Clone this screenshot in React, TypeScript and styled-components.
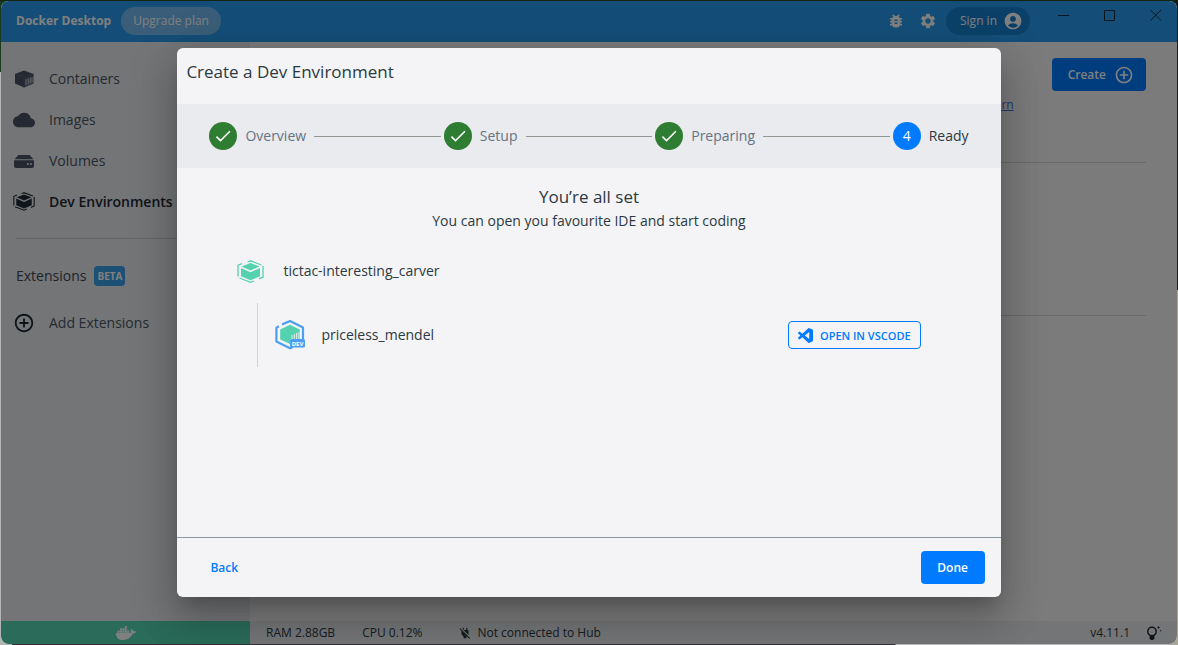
import React from "react";
import styled, { createGlobalStyle } from "styled-components";
import {
  MdAccountCircle,
  MdAddCircleOutline,
  MdBugReport,
  MdCheck,
  MdCloud,
  MdPowerOff,
  MdSettings,
} from "react-icons/md";
import { FaDocker } from "react-icons/fa";

const GlobalStyle = createGlobalStyle`
  *, *::before, *::after { box-sizing: border-box; }
  body {
    margin: 0;
    font-family: "Open Sans", "Noto Sans", sans-serif;
    font-size: 14px;
    line-height: 20px;
    color: #2b3a42;
  }
  button { font-family: inherit; cursor: pointer; }
  h1, h2, p, ul, ol { margin: 0; padding: 0; }
  svg { display: block; flex: none; }
`;

const Desktop = styled.div`
  min-height: 100vh;
  display: flex;
  padding: 1px;
  background:
    linear-gradient(#14240f, #14240f) top / 100% 1px no-repeat,
    linear-gradient(#33303a, #33303a) 12px 100% / 75% 1px no-repeat,
    linear-gradient(#1c1c1c 45%, #aaa698 45%) right / 8px 100% no-repeat,
    linear-gradient(#1c3a1c 72px, #b4b6b6 72px);
`;

const AppWindow = styled.div`
  flex: 1;
  display: flex;
  flex-direction: column;
  position: relative;
  border-radius: 8px;
  overflow: hidden;
  background: #f6f6f6;
`;

const TitleBar = styled.header`
  height: 41px;
  display: flex;
  align-items: center;
  padding: 0 15px 2px;
  background: #289cf0;
  color: #fff;
`;

const Brand = styled.span`
  font-size: 12px;
  font-weight: 700;
  margin-right: 10px;
`;

const Pill = styled.button<{ $tone: "light" | "dark" }>`
  display: flex;
  align-items: center;
  gap: 6px;
  height: 28px;
  padding: ${(p) => (p.$tone === "light" ? "0 12px" : "0 7px 0 14px")};
  border: 0;
  border-radius: 14px;
  font-size: 12px;
  color: #fff;
  background: ${(p) => (p.$tone === "light" ? "#74bcf2" : "#1682d2")};
`;

const Spacer = styled.div`
  flex: 1;
`;

const BarActions = styled.div`
  display: flex;
  gap: 14px;
  margin-right: 9px;
`;

const BarButton = styled.button`
  display: flex;
  padding: 0;
  border: 0;
  background: none;
  color: #fff;
`;

const WindowControls = styled.div`
  display: flex;
  align-self: flex-start;
  gap: 34px;
  margin-left: 28px;
  padding-top: 8px;
`;

const WindowButton = styled(BarButton)`
  color: #1d2c3a;
`;

const Middle = styled.div`
  flex: 1;
  display: flex;
`;

const Sidebar = styled.nav`
  width: 249px;
  padding: 16px 15px 0 12px;
  background: #e9ebee;
`;

const NavList = styled.ul`
  list-style: none;
`;

const NavLink = styled.a<{ $active?: boolean }>`
  display: flex;
  align-items: center;
  gap: 14px;
  height: 41px;
  color: ${(p) => (p.$active ? "#1c2833" : "#4a5564")};
  font-weight: ${(p) => (p.$active ? 600 : 400)};
  text-decoration: none;
`;

const SideRule = styled.hr`
  margin: 16px 0 27px 3px;
  border: 0;
  border-top: 1px solid #c8cbd0;
`;

const SectionTitle = styled.div`
  display: flex;
  align-items: center;
  gap: 8px;
  padding-left: 3px;
  margin-bottom: 16px;
  color: #3c4752;
`;

const Badge = styled.span`
  padding: 0 3px;
  border-radius: 4px;
  font-size: 10px;
  font-weight: 700;
  color: #fff;
  background: #38a0e8;
`;

const Main = styled.main`
  flex: 1;
  padding: 16px 31px 0 24px;
`;

const MainHead = styled.div`
  display: flex;
  justify-content: flex-end;
  align-items: flex-start;
  gap: 38px;
  height: 105px;
  border-bottom: 1px solid #d2d4d8;
`;

const LearnLink = styled.a`
  margin-top: 37px;
  font-size: 12px;
  color: #4478e8;
`;

const MainRow = styled.div`
  height: 153px;
  border-bottom: 1px solid #d2d4d8;
`;

const SolidButton = styled.button`
  display: flex;
  align-items: center;
  justify-content: center;
  gap: 8px;
  min-width: 64px;
  height: 33px;
  padding: 0 12px 0 16px;
  border: 0;
  border-radius: 4px;
  font-size: 12px;
  font-weight: 600;
  color: #fff;
  background: #007bff;
`;

const DoneButton = styled(SolidButton)`
  padding: 0 16px;
`;

const StatusBar = styled.footer`
  height: 23px;
  display: flex;
  font-size: 12px;
  background: #e9ebee;
`;

const Engine = styled.div`
  width: 249px;
  display: flex;
  align-items: center;
  justify-content: center;
  color: #fff;
  background: #54d6b2;
`;

const Stats = styled.div`
  flex: 1;
  display: flex;
  align-items: center;
  padding: 0 15px 0 16px;
`;

const Stat = styled.span<{ $gap: number }>`
  display: flex;
  align-items: center;
  gap: 5px;
  margin-right: ${(p) => p.$gap}px;
`;

const Backdrop = styled.div`
  position: absolute;
  inset: 0;
  display: flex;
  align-items: center;
  justify-content: center;
  background: rgba(0, 0, 0, 0.5);
`;

const Dialog = styled.section`
  width: 70%;
  height: calc(100vh - 96px);
  display: flex;
  flex-direction: column;
  border-radius: 6px;
  overflow: hidden;
  background: #f4f4f6;
  box-shadow: 0 11px 15px -7px rgba(0, 0, 0, 0.2),
    0 24px 38px 3px rgba(0, 0, 0, 0.14), 0 9px 46px 8px rgba(0, 0, 0, 0.12);
`;

const DialogTitle = styled.h1`
  height: 56px;
  padding: 12px 9px;
  font-size: 17px;
  line-height: 24px;
  font-weight: 500;
`;

const Stepper = styled.ol`
  display: flex;
  align-items: center;
  height: 64px;
  padding: 0 32px;
  list-style: none;
  background: #e9ebee;
`;

const Step = styled.li<{ $current?: boolean }>`
  display: flex;
  align-items: center;
  gap: 8px;
  color: ${(p) => (p.$current ? "#2b3a42" : "#677285")};

  &:not(:last-child) {
    flex: 1 1 auto;
  }
  &:not(:last-child)::after {
    content: "";
    flex: 1;
    margin-right: 3px;
    border-top: 1px solid #949894;
  }
`;

const StepDot = styled.span<{ $current?: boolean }>`
  display: flex;
  align-items: center;
  justify-content: center;
  width: 28px;
  height: 28px;
  border-radius: 50%;
  color: #fff;
  background: ${(p) => (p.$current ? "#007bff" : "#2e7d32")};
`;

const DialogBody = styled.div`
  flex: 1;
  padding: 17px 60px 0;
`;

const Intro = styled.div`
  text-align: center;
`;

const Headline = styled.h2`
  margin-bottom: 2px;
  font-size: 17px;
  line-height: 24px;
  font-weight: 500;
`;

const EnvRow = styled.div`
  display: flex;
  align-items: center;
  gap: 19px;
  margin-top: 30px;
  height: 20px;
`;

const ServiceRow = styled.div`
  display: flex;
  align-items: center;
  gap: 16px;
  height: 64px;
  margin: 22px 20px 0;
  padding-left: 17px;
  border-left: 1px solid #d0d3d8;
`;

const OutlineButton = styled.button`
  display: flex;
  align-items: center;
  gap: 7px;
  height: 28px;
  margin-left: auto;
  padding: 0 9px;
  border: 1px solid #007bff;
  border-radius: 4px;
  font-size: 11px;
  font-weight: 600;
  color: #007bff;
  background: none;
`;

const DialogFooter = styled.div`
  display: flex;
  align-items: center;
  justify-content: space-between;
  height: 60px;
  padding: 0 16px 0 33px;
  border-top: 1px solid #8a9aa6;
`;

const TextButton = styled.button`
  padding: 0;
  border: 0;
  font-size: 12px;
  font-weight: 600;
  color: #007bff;
  background: none;
`;

const ContainerIcon = () => (
  <svg width="22" height="20" viewBox="0 0 22 20" aria-hidden="true">
    <path d="M11 1.5 20.5 5v9.6L11 18.5 2 14.6V5Z" fill="#4a5268" />
    <path d="M2 5l9 3.2L20.500 5M11 8.200V18.500" fill="none" stroke="#5e667c" strokeWidth=".6" />
    <path d="M13 10v6.500M15.200 9.200v6.400M17.200 8.500v6M19 8v6" stroke="#e9ebee" strokeWidth=".9" />
  </svg>
);

const DriveIcon = () => (
  <svg width="22" height="20" viewBox="0 0 22 20" aria-hidden="true">
    <path d="M5.500 4h11L20.500 8.300H1.500Z" fill="#4a5268" />
    <path d="M1 9.300h20v5.700a2 2 0 0 1-2 2H3a2 2 0 0 1-2-2Z" fill="#4a5268" />
    <circle cx="14.800" cy="13" r="1" fill="#e9ebee" />
    <circle cx="17.800" cy="13" r="1" fill="#e9ebee" />
  </svg>
);

const BoxIcon = ({ size, color }: { size: number; color: string }) => (
  <svg width={size} height={(size * 23) / 27} viewBox="0 0 27 23" aria-hidden="true">
    <path d="M4.500 6.500 13.500 3l9 3.500-9 4Z" fill={color} />
    <path d="M4 8l9.500 4.200L23 8v8.200l-9.500 4L4 16.200Z" fill={color} />
    <path
      d="M10.500 2 13.500.8l11 4.200M1 16.500V5.200L5 3.600M26 6v11.200l-4 1.700M16.800 21l-3.300 1.300L2.500 18"
      fill="none"
      stroke={color}
      strokeWidth="1.300"
    />
  </svg>
);

const DevContainerIcon = () => (
  <svg width="30" height="30" viewBox="0 0 30 30" aria-hidden="true">
    <path
      d="M7 4.600 15 1l13 6.400V19M3.800 6.300 1.400 7.800v13.600L15 28.200l2.500-1"
      fill="none"
      stroke="#4c9ff2"
      strokeWidth="2.200"
      strokeLinejoin="round"
    />
    <path d="M15 4.800 24.800 9.600V19H15.500v5.300L5.200 19.500V9.600Z" fill="#54d2b0" />
    <path d="M17 15v4M19.300 14v5M21.600 13v6M23.800 12v7" stroke="#f4f4f6" strokeWidth=".9" />
    <rect x="15" y="19" width="15" height="8.500" rx="1.500" fill="#4c9ff2" />
    <text
      x="22.500"
      y="25.600"
      textAnchor="middle"
      fontFamily="Open Sans, sans-serif"
      fontSize="6"
      fontWeight="700"
      fill="#fff"
    >
      DEV
    </text>
  </svg>
);

const VsCodeIcon = () => (
  <svg width="15" height="15" viewBox="0 0 24 24" fill="currentColor" aria-hidden="true">
    <path d="M23.150 2.587 18.210.210a1.494 1.494 0 0 0-1.705.290l-9.460 8.630-4.120-3.128a.999.999 0 0 0-1.276.057L.327 7.261A1 1 0 0 0 .326 8.740L3.899 12 .326 15.260a1 1 0 0 0 .001 1.479L1.650 17.940a.999.999 0 0 0 1.276.057l4.120-3.128 9.460 8.630a1.492 1.492 0 0 0 1.704.290l4.942-2.377A1.500 1.500 0 0 0 24 20.060V3.939a1.500 1.500 0 0 0-.850-1.352ZM18.004 17.448 10.826 12l7.178-5.448Z" />
  </svg>
);

const BulbIcon = () => (
  <svg width="16" height="16" viewBox="0 0 16 16" aria-hidden="true">
    <circle cx="6" cy="6.500" r="4.200" fill="none" stroke="#1c2833" strokeWidth="1.500" />
    <path d="M3.600 10.300h4.800v3.200L7 15H5l-1.400-1.500Z" fill="#1c2833" />
    <path
      d="M12.500.8l.5 1.200 1.200.5-1.200.5-.5 1.200L12 3l-1.200-.5L12 2ZM14.500 4.500l.3.900.9.300-.9.300-.3.900-.3-.9-.9-.3.900-.3Z"
      fill="#1c2833"
    />
  </svg>
);

const navItems = [
  { label: "Containers", icon: <ContainerIcon /> },
  { label: "Images", icon: <MdCloud size={22} color="#4a5268" /> },
  { label: "Volumes", icon: <DriveIcon /> },
  { label: "Dev Environments", icon: <BoxIcon size={22} color="#1c2833" />, active: true },
];

const steps = ["Overview", "Setup", "Preparing", "Ready"];

export default function App() {
  return (
    <Desktop>
      <GlobalStyle />
      <AppWindow>
        <TitleBar>
          <Brand>Docker Desktop</Brand>
          <Pill $tone="light">Upgrade plan</Pill>
          <Spacer />
          <BarActions>
            <BarButton aria-label="Troubleshoot">
              <MdBugReport size={18} />
            </BarButton>
            <BarButton aria-label="Settings">
              <MdSettings size={18} />
            </BarButton>
          </BarActions>
          <Pill $tone="dark">
            Sign in
            <MdAccountCircle size={20} />
          </Pill>
          <WindowControls>
            <WindowButton aria-label="Minimize">
              <svg width="12" height="12" viewBox="0 0 12 12">
                <path d="M0 6.500h11" stroke="currentColor" />
              </svg>
            </WindowButton>
            <WindowButton aria-label="Maximize">
              <svg width="12" height="12" viewBox="0 0 12 12">
                <path d="M.5 1.500h10v10H.5Z" fill="none" stroke="currentColor" />
              </svg>
            </WindowButton>
            <WindowButton aria-label="Close">
              <svg width="12" height="12" viewBox="0 0 12 12">
                <path d="M.5 1 11 11.500M11 1 .5 11.500" stroke="currentColor" />
              </svg>
            </WindowButton>
          </WindowControls>
        </TitleBar>

        <Middle>
          <Sidebar>
            <NavList>
              {navItems.map((item) => (
                <li key={item.label}>
                  <NavLink href="#" $active={item.active}>
                    {item.icon}
                    {item.label}
                  </NavLink>
                </li>
              ))}
            </NavList>
            <SideRule />
            <SectionTitle>
              Extensions <Badge>BETA</Badge>
            </SectionTitle>
            <NavLink href="#">
              <MdAddCircleOutline size={22} color="#1c2833" />
              Add Extensions
            </NavLink>
          </Sidebar>
          <Main>
            <MainHead>
              <LearnLink href="#">Learn</LearnLink>
              <SolidButton>
                Create
                <MdAddCircleOutline size={20} />
              </SolidButton>
            </MainHead>
            <MainRow />
          </Main>
        </Middle>

        <StatusBar>
          <Engine>
            <FaDocker size={20} />
          </Engine>
          <Stats>
            <Stat $gap={27}>RAM 2.88GB</Stat>
            <Stat $gap={36}>CPU 0.12%</Stat>
            <Stat $gap={0}>
              <MdPowerOff size={14} />
              Not connected to Hub
            </Stat>
            <Spacer />
            <Stat $gap={16}>v4.11.1</Stat>
            <BulbIcon />
          </Stats>
        </StatusBar>

        <Backdrop>
          <Dialog role="dialog" aria-labelledby="dialog-title">
            <DialogTitle id="dialog-title">Create a Dev Environment</DialogTitle>
            <Stepper>
              {steps.map((label, i) => {
                const current = i === steps.length - 1;
                return (
                  <Step key={label} $current={current}>
                    <StepDot $current={current}>{current ? i + 1 : <MdCheck size={20} />}</StepDot>
                    {label}
                  </Step>
                );
              })}
            </Stepper>
            <DialogBody>
              <Intro>
                <Headline>You’re all set</Headline>
                <p>You can open you favourite IDE and start coding</p>
              </Intro>
              <EnvRow>
                <BoxIcon size={27} color="#54d2b0" />
                tictac-interesting_carver
              </EnvRow>
              <ServiceRow>
                <DevContainerIcon />
                priceless_mendel
                <OutlineButton>
                  <VsCodeIcon />
                  OPEN IN VSCODE
                </OutlineButton>
              </ServiceRow>
            </DialogBody>
            <DialogFooter>
              <TextButton>Back</TextButton>
              <DoneButton>Done</DoneButton>
            </DialogFooter>
          </Dialog>
        </Backdrop>
      </AppWindow>
    </Desktop>
  );
}
